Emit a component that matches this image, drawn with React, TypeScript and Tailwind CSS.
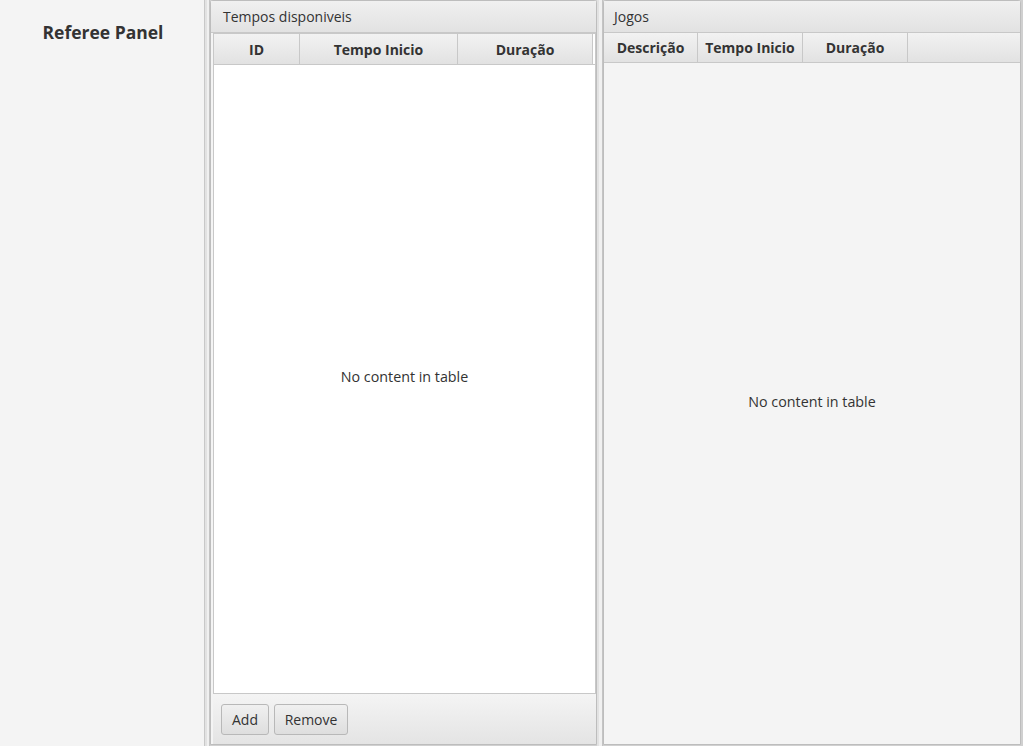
import React from "react";

const font = { fontFamily: '"Open Sans", "Noto Sans", "Liberation Sans", sans-serif' };

function HeaderCell({ label, w, grow }: { label: string; w?: string; grow?: boolean }) {
  return (
    <div
      className={`flex items-center justify-center border-r border-[#c8c8c8] bg-gradient-to-b from-[#f2f2f2] to-[#e2e2e2] text-[14px] font-bold text-[#333] ${w ?? ""} ${grow ? "flex-1" : ""}`}
    >
      {label}
    </div>
  );
}

function Button({ label, w }: { label: string; w: string }) {
  return (
    <div
      className={`flex h-[31px] ${w} items-center justify-center rounded-[3px] border border-[#b8b8b8] bg-gradient-to-b from-[#f0f0f0] to-[#dedede] text-[14px] text-[#333]`}
    >
      {label}
    </div>
  );
}

function TitleBar({ title, pl }: { title: string; pl: string }) {
  return (
    <div className={`flex h-[32px] shrink-0 items-center border-b border-[#c8c8c8] bg-gradient-to-b from-[#f0f0f0] to-[#e2e2e2] ${pl} text-[14px] text-[#333]`}>
      {title}
    </div>
  );
}

function Divider({ w }: { w: string }) {
  return (
    <div className={`flex ${w} shrink-0 border-r border-[#c4c4c4] bg-[#ebebeb]`}>
      <div className="w-[2px] bg-[#e2e2e2]" />
      <div className="flex-1 bg-[#f0f0f0]" />
    </div>
  );
}

export default function App() {
  return (
    <div className="flex h-[746px] w-[1023px] overflow-hidden bg-[#d0d0d0]" style={font}>
      {/* left */}
      <div className="flex w-[205px] shrink-0 justify-center border-r border-[#c8c8c8] bg-[#f4f4f4] pt-[19px] pl-[2px]">
        <div className="text-[17.5px] font-bold text-[#333]">Referee Panel</div>
      </div>
      <Divider w="w-[5px]" />
      {/* middle titled pane */}
      <div className="flex h-[745px] w-[387px] shrink-0 flex-col rounded-t-[3px] border border-[#bdbdbd] bg-[#f4f4f4]">
        <TitleBar title="Tempos disponiveis" pl="pl-[12px]" />
        <div className="flex flex-1 flex-col bg-[#f4f4f4] pl-[2px]">
          <div className="flex flex-1 flex-col border border-[#c8c8c8] bg-white">
            <div className="flex h-[31px] shrink-0 border-b border-[#c8c8c8] pr-[2px]">
              <HeaderCell label="ID" w="w-[86px]" />
              <HeaderCell label="Tempo Inicio" w="w-[158px]" />
              <HeaderCell label="Duração" grow />
            </div>
            <div className="flex flex-1 items-center justify-center pb-[4px] text-[14.3px] text-[#333]">
              No content in table
            </div>
          </div>
          <div className="flex h-[50px] shrink-0 items-center gap-[5px] bg-gradient-to-b from-[#f4f4f4] to-[#e4e4e4] pl-[8px]">
            <Button label="Add" w="w-[48px]" />
            <Button label="Remove" w="w-[74px]" />
          </div>
        </div>
      </div>
      <Divider w="w-[6px]" />
      {/* right titled pane */}
      <div className="mr-[2px] flex h-[745px] flex-1 flex-col rounded-t-[3px] border border-[#bdbdbd] bg-[#f4f4f4]">
        <TitleBar title="Jogos" pl="pl-[10px]" />
        <div className="flex flex-1 flex-col">
          <div className="flex h-[30px] shrink-0 border-b border-[#c8c8c8]">
            <HeaderCell label="Descrição" w="w-[94px]" />
            <HeaderCell label="Tempo Inicio" w="w-[105px]" />
            <HeaderCell label="Duração" w="w-[105px]" />
            <div className="flex-1 bg-gradient-to-b from-[#f2f2f2] to-[#e2e2e2]" />
          </div>
          <div className="flex flex-1 items-center justify-center pb-[4px] text-[14.3px] text-[#333]">
            No content in table
          </div>
        </div>
      </div>
    </div>
  );
}
